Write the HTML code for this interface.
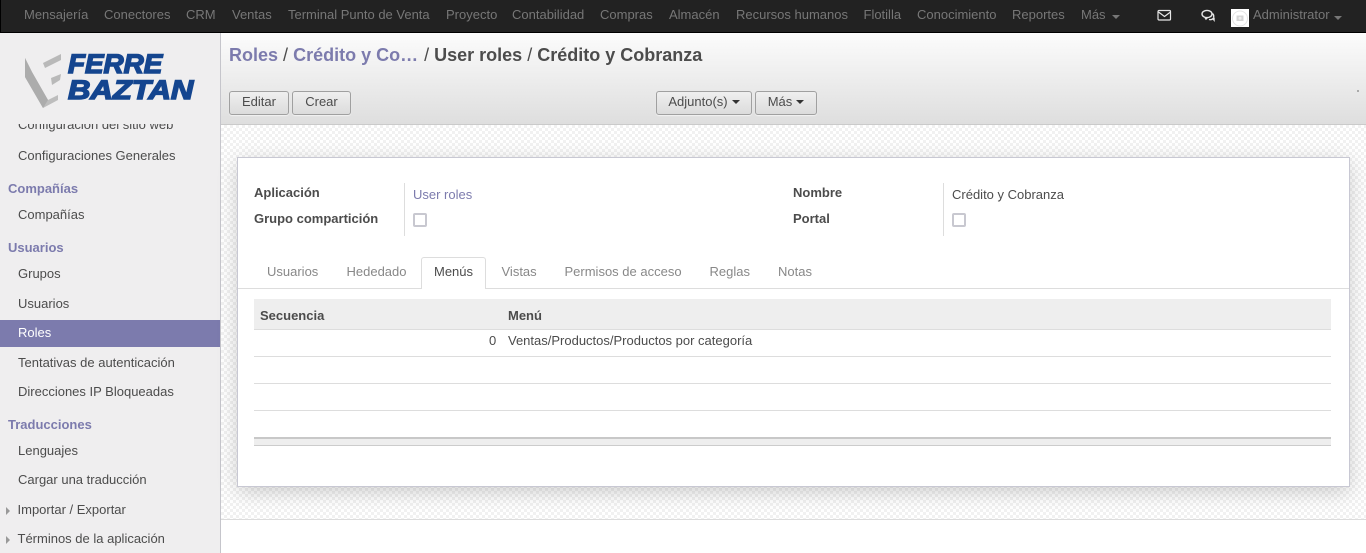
<!DOCTYPE html>
<html lang="es"><head><meta charset="utf-8"><title>Roles</title>
<style>
*{box-sizing:border-box}
html,body{margin:0;padding:0;width:1366px;height:553px;overflow:hidden;background:#fff;font:13px/18px "Liberation Sans",sans-serif;color:#4c4c4c}
.a{position:absolute;white-space:nowrap}
#nav{position:absolute;left:0;top:0;width:1366px;height:33px;background:#222;border-bottom:1px solid #000;border-left:1px solid #000}
#nav span.a{color:#777;top:6px;font-size:13px}
#side{position:absolute;left:0;top:33px;width:221px;height:520px;background:#efeeef;border-right:1px solid #c5c5cb;overflow:hidden}
#side .i{position:absolute;left:18px;color:#4c4c4c;white-space:nowrap;font-size:13px}
#side .h{position:absolute;left:8px;color:#7c7bad;font-weight:bold;white-space:nowrap;font-size:13px}
#side .sel{position:absolute;left:0;top:287px;width:220px;height:27px;background:#7c7bad;color:#fff;padding:4px 0 0 18px;font-size:13px}
.tri{position:absolute;left:6px;width:0;height:0;border-left:4px solid #999;border-top:4px solid transparent;border-bottom:4px solid transparent}
#head{position:absolute;left:221px;top:33px;width:1145px;height:92px;background:linear-gradient(#fcfcfc,#dedede);border-bottom:1px solid #cacaca}
.bc{position:absolute;left:8px;top:10px;font-size:18px;line-height:24px;font-weight:bold;white-space:nowrap;color:#4c4c4c}
.bc b{color:#7c7bad}.bc i{font-style:normal;font-weight:normal}
.btn{position:absolute;top:58px;height:24px;border:1px solid #a0a0a0;border-radius:3px;background:linear-gradient(#efefef,#dcdcdc);color:#4c4c4c;text-align:center;line-height:20px;font-size:13px;box-shadow:0 1px 1px rgba(255,255,255,.6)}
.caret{display:inline-block;width:0;height:0;border-top:4px solid #333;border-left:4px solid transparent;border-right:4px solid transparent;vertical-align:2px;margin-left:4px}
#bg{position:absolute;left:221px;top:125px;width:1145px;height:395px;background-color:#fff;background-image:conic-gradient(#f1f1f1 25%,#fff 0 50%,#f1f1f1 0 75%,#fff 0);background-size:6px 6px;border-bottom:1px solid #dcdcdc}
#sheet{position:absolute;left:237px;top:157px;width:1113px;height:330px;background:#fff;border:1px solid #c8c8d3;box-shadow:0 5px 20px -1px rgba(0,0,0,.2)}
.lb{position:absolute;font-weight:bold;color:#4c4c4c;white-space:nowrap;font-size:13px}
.val{position:absolute;white-space:nowrap;font-size:13px}
.vl{position:absolute;width:1px;background:#ddd;top:183px;height:53px}
.cb{position:absolute;width:14px;height:14px;border:2px solid #c8c8d0;border-radius:2px;background:#fff}
.tab{position:absolute;top:263px;color:#888;white-space:nowrap;font-size:13px}
.rule{position:absolute;left:254px;width:1077px;height:1px;background:#ddd}
.logo{left:68px;font:italic 900 27px/28px "Liberation Sans",sans-serif;-webkit-text-stroke:1.5px #14458f;color:#14458f;transform-origin:left}
</style></head><body>
<div id="nav">
<span class="a" style="left:23px">Mensajería</span><span class="a" style="left:103px">Conectores</span><span class="a" style="left:185px">CRM</span><span class="a" style="left:231px">Ventas</span><span class="a" style="left:287px">Terminal Punto de Venta</span><span class="a" style="left:445px">Proyecto</span><span class="a" style="left:511px">Contabilidad</span><span class="a" style="left:599px">Compras</span><span class="a" style="left:668px">Almacén</span><span class="a" style="left:735px">Recursos humanos</span><span class="a" style="left:862.500px">Flotilla</span><span class="a" style="left:916px">Conocimiento</span><span class="a" style="left:1011px">Reportes</span><span class="a" style="left:1080px">Más</span>
<i class="a" style="left:1111px;top:15px;width:0;height:0;border-top:4px solid #777;border-left:4px solid transparent;border-right:4px solid transparent"></i>
<svg class="a" style="left:1156px;top:9px" width="15" height="13" viewBox="0 0 15 13" fill="none" stroke="#e6e6e6" stroke-width="1.2"><rect x="1" y="1.5" width="12.5" height="9.5" rx="1"/><path d="M1.5 3l6 4.500 6-4.500"/></svg>
<svg class="a" style="left:1200px;top:9px" width="15" height="13" viewBox="0 0 15 13" fill="none" stroke="#e6e6e6" stroke-width="1.4"><ellipse cx="6" cy="5" rx="5" ry="3.600"/><path d="M4 8.500l1 1.500 1.500-1.500"/><path d="M11.500 4.500q2 2 .8 4M8 10.500q2.500.5 4-.8l1 1.300v-2.500"/></svg>
<div class="a" style="left:1230px;top:9px;width:18px;height:18px;background:#fff"><svg width="18" height="18" viewBox="0 0 18 18" fill="none"><circle cx="9" cy="9.500" r="7.500" stroke="#e4e4e4" stroke-width="1"/><rect x="5.500" y="6.500" width="7" height="5.500" fill="#d4d4d4"/><circle cx="9" cy="9.300" r="1.500" fill="#eee"/></svg></div>
<span class="a" style="left:1252px">Administrator</span>
<i class="a" style="left:1333px;top:16px;width:0;height:0;border-top:4px solid #777;border-left:4px solid transparent;border-right:4px solid transparent"></i>
</div>

<div id="side">
<div class="i" style="top:83px">Configuración del sitio web</div>
<div style="position:absolute;left:0;top:0;width:220px;height:91px;background:#efeeef"></div>
<svg class="a" style="left:24px;top:20px" width="40" height="58" viewBox="0 0 40 58"><path d="M1 5L8 19 24 47 34 42V47L19 55 1 24z" fill="#bdbdbd"/><path d="M1 5L8 19 24 47 19 55 1 24z" fill="#acacac"/><path d="M19 10L37 1V7L21 15z" fill="#b9b9b9"/><path d="M27 25L37 21 36 27 28 32z" fill="#b9b9b9"/></svg>
<div class="a logo" style="top:17px;transform:scaleX(1.03)">FERRE</div>
<div class="a logo" style="top:43px;transform:scaleX(1.15)">BAZTAN</div>
<div class="i" style="top:114px">Configuraciones Generales</div>
<div class="h" style="top:147px">Compañías</div>
<div class="i" style="top:173px">Compañías</div>
<div class="h" style="top:206px">Usuarios</div>
<div class="i" style="top:232px">Grupos</div>
<div class="i" style="top:262px">Usuarios</div>
<div class="sel">Roles</div>
<div class="i" style="top:321px">Tentativas de autenticación</div>
<div class="i" style="top:350px">Direcciones IP Bloqueadas</div>
<div class="h" style="top:383px">Traducciones</div>
<div class="i" style="top:409px">Lenguajes</div>
<div class="i" style="top:438px">Cargar una traducción</div>
<i class="tri" style="top:474px"></i><div class="i" style="top:468px;left:17.500px">Importar / Exportar</div>
<i class="tri" style="top:503px"></i><div class="i" style="top:497px;left:17.500px">Términos de la aplicación</div>
</div>

<div id="head">
<div class="bc"><b>Roles</b> <i>/</i> <b>Crédito y Co…</b> <i style="margin-left:1px">/</i> User roles <i>/</i> Crédito y Cobranza</div>
<div class="btn" style="left:8px;width:60px">Editar</div>
<div class="btn" style="left:71px;width:59px">Crear</div>
<div class="btn" style="left:435px;width:96px">Adjunto(s)<i class="caret"></i></div>
<div class="btn" style="left:534px;width:62px">Más<i class="caret"></i></div>
<div class="a" style="left:1136px;top:57px;width:2px;height:2px;background:#aaa"></div>
</div>
<div id="bg"></div>
<div id="sheet"></div>

<div class="lb" style="left:254px;top:184px">Aplicación</div>
<div class="lb" style="left:254px;top:210px">Grupo compartición</div>
<div class="vl" style="left:404px"></div>
<div class="val" style="left:413px;top:186px;color:#7c7bad">User roles</div>
<div class="cb" style="left:413px;top:213px"></div>
<div class="lb" style="left:793px;top:184px">Nombre</div>
<div class="lb" style="left:793px;top:210px">Portal</div>
<div class="vl" style="left:943px"></div>
<div class="val" style="left:952px;top:186px">Crédito y Cobranza</div>
<div class="cb" style="left:952px;top:213px"></div>

<div class="a" style="left:238px;top:288px;width:1111px;height:1px;background:#ddd"></div>
<div class="tab" style="left:267px">Usuarios</div>
<div class="tab" style="left:346.500px">Hededado</div>
<div class="a" style="left:421px;top:257px;width:65px;height:32px;background:#fff;border:1px solid #ddd;border-bottom:0;border-radius:3px 3px 0 0"></div>
<div class="tab" style="left:434px;color:#4c4c4c">Menús</div>
<div class="tab" style="left:501.500px">Vistas</div>
<div class="tab" style="left:564.500px">Permisos de acceso</div>
<div class="tab" style="left:709.500px">Reglas</div>
<div class="tab" style="left:778px">Notas</div>

<div class="a" style="left:254px;top:299px;width:1077px;height:31px;background:#eee;border-bottom:1px solid #ddd"></div>
<div class="lb" style="left:260px;top:307px">Secuencia</div>
<div class="lb" style="left:508px;top:307px">Menú</div>
<div class="val" style="left:489px;top:332px">0</div>
<div class="val" style="left:508px;top:332px">Ventas/Productos/Productos por categoría</div>
<div class="rule" style="top:356px"></div>
<div class="rule" style="top:383px"></div>
<div class="rule" style="top:410px"></div>
<div class="a" style="left:254px;top:437px;width:1077px;height:9px;background:#eee;border-top:2px solid #c8c8c8;border-bottom:1px solid #ccc"></div>
</body></html>
